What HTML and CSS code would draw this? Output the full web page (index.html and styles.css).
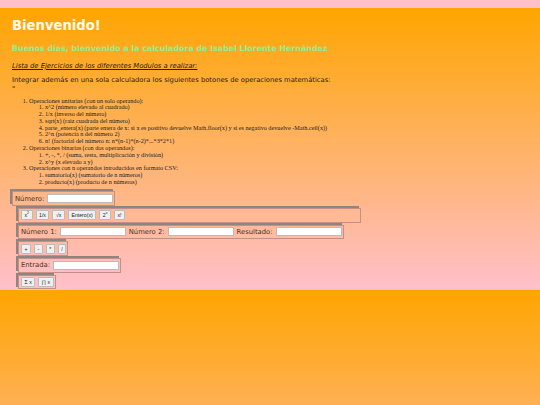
FILE: index.html
```html
<!DOCTYPE html>
<html lang="es">
<head>
	<meta charset="UTF-8">
	<title>Calculadora</title>
	<link rel="stylesheet" href="styles.css">
</head>
<body>
<h1>Bienvenido!</h1>
<h2>Buenos días, bienvenido a la calculadora de Isabel Llorente Hernández</h2>
<p class="sub">Lista de Ejercicios de los diferentes Modulos a realizar:</p>
<p class="intro">Integrar además en una sola calculadora los siguientes botones de operaciones matemáticas:</p>
<p class="quote">"</p>
<ol class="ops">
	<li>Operaciones unitarias (con un solo operando):
		<ol>
			<li>x^2 (número elevado al cuadrado)</li>
			<li>1/x (inverso del número)</li>
			<li>sqrt(x) (raiz cuadrada del número)</li>
			<li>parte_entera(x) (parte entera de x: si x es positivo devuelve Math.floor(x) y si es negativo devuelve -Math.ceil(x))</li>
			<li>2^n (potencia n del número 2)</li>
			<li>n! (factorial del número n: n*(n-1)*(n-2)*...*3*2*1)</li>
		</ol>
	</li>
	<li>Operaciones binarias (con dos operandos):
		<ol>
			<li>+, -, *, / (suma, resta, multiplicación y división)</li>
			<li>x^y (x elevado a y)</li>
		</ol>
	</li>
	<li>Operaciones con n operandos introducidos en formato CSV:
		<ol>
			<li>sumatorio(x) (sumatorio de n números)</li>
			<li>producto(x) (producto de n números)</li>
		</ol>
	</li>
</ol>
<div class="calc">
	<div class="box"><label>Número:</label><input type="text"></div>
	<div class="inner">
		<div class="box wide">
			<button>x<sup>2</sup></button><button>1/x</button><button>√x</button><button>Entero(x)</button><button>2<sup>x</sup></button><button>x!</button>
		</div>
		<div class="box"><label>Número 1:</label><input type="text"><label>Número 2:</label><input type="text"><label>Resultado:</label><input type="text"></div>
		<div class="box"><button>+</button><button>-</button><button>*</button><button>/</button></div>
		<div class="box"><label>Entrada:</label><input type="text"></div>
		<div class="box"><button>Σ x</button><button>∏ x</button></div>
	</div>
</div>
</body>
</html>
```

FILE: styles.css
```css
html {
	margin-top: 8px;
}

body {
	margin: 0;
	padding: 10px 12px 1px;
	background: linear-gradient(orange, pink);
	font-family: "DejaVu Sans", sans-serif;
	font-size: 6.75px;
	color: #222;
}

h1 {
	margin: 0 0 10px;
	font-size: 13.2px;
	line-height: 16px;
	color: #fffbe8;
}

h2 {
	margin: 0 0 7.5px;
	font-size: 7.9px;
	line-height: 10px;
	color: lightgreen;
}

.sub {
	margin: 0 0 5px;
	font-style: italic;
	text-decoration: underline;
	line-height: 9px;
}

.intro {
	margin: 0;
	line-height: 9px;
}

.quote {
	margin: 0 0 4px;
	line-height: 9px;
}

.ops {
	margin: 0;
	padding-left: 17px;
	font: 6.2px/6.8px "Liberation Serif", serif;
}

.ops ol {
	padding-left: 16px;
}

.calc {
	margin-top: 5.5px;
}

.box {
	display: flex;
	align-items: center;
	gap: 3px;
	width: fit-content;
	height: 14.5px;
	box-sizing: border-box;
	padding: 0 1px 0 2px;
	border: 1px solid #c48f85;
	box-shadow: -2px -2px 0 #8f8580;
	margin-top: 2.2px;
}

.inner {
	margin-left: 6px;
}

.wide {
	width: 343px;
}

label {
	font-size: 6.8px;
	color: #432;
}

input {
	width: 66px;
	height: 9px;
	box-sizing: border-box;
	padding: 0;
	border: 1px solid #bbb;
	background: #fff;
}

button {
	padding: 0 2.5px;
	height: 10px;
	border: 1px solid #bbb;
	border-radius: 1px;
	background: #f0f0f0;
	font: 5.2px/8px "Liberation Sans", sans-serif;
	color: #222;
}

sup {
	font-size: 3.5px;
	line-height: 0;
}
```
